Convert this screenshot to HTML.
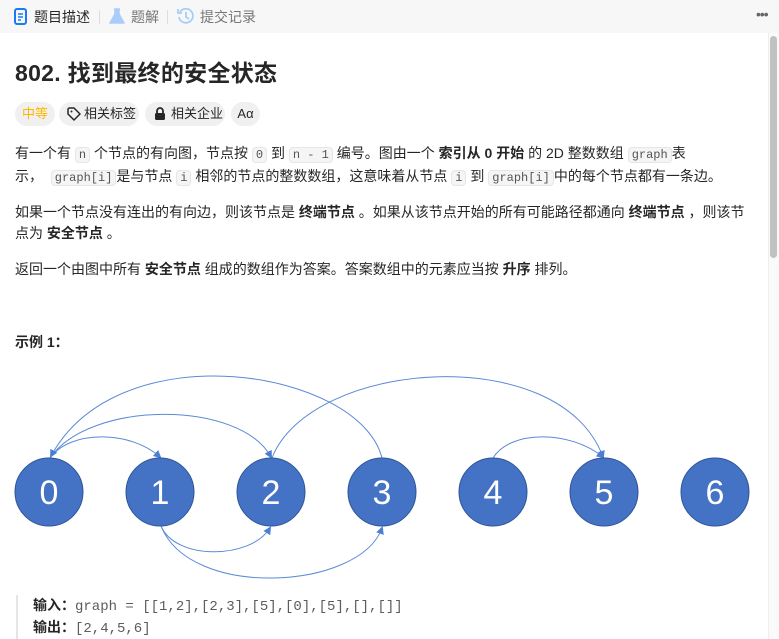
<!DOCTYPE html>
<html><head><meta charset="utf-8"><style>
*{margin:0;padding:0;box-sizing:border-box}
html,body{width:779px;height:639px;overflow:hidden}
body{background:#fff;font-family:"Liberation Sans","Noto Sans CJK SC",sans-serif;color:#262626;position:relative}
.hdr{position:absolute;left:0;top:0;width:779px;height:33px;background:#f7f7f8;font-size:14px}
.tab{position:absolute;top:8px;line-height:18px}
.sep{position:absolute;top:10px;width:1px;height:14px;background:#ddd}
.main{position:absolute;left:15px;top:0;width:745px}
h1{position:absolute;top:54px;left:0;font-size:23px;font-weight:700;white-space:nowrap;letter-spacing:0.3px}
.tags{position:absolute;top:102px;left:0;height:24px;width:300px}
.tag{position:absolute;top:0;height:24px;border-radius:12px;background:#f0f0f0;font-size:13px;line-height:24px;white-space:nowrap;color:#262626;padding-left:25px}
p{position:absolute;left:0;font-size:14px;line-height:21px;width:760px;white-space:nowrap}
code{font-family:"Liberation Mono",monospace;font-size:12px;background:#f5f5f5;border:1px solid #e6e6e6;border-radius:4px;padding:0 3px;color:#555}
b{font-weight:700}
.scroll{position:absolute;left:768px;top:33px;width:11px;height:606px;background:#fafafa;border-left:1px solid #eee}
.thumb{position:absolute;left:770px;top:36px;width:7px;height:222px;border-radius:4px;background:#c1c1c1}
.ex{position:absolute;left:16px;top:595px;border-left:2px solid #e5e5e5;padding-left:15px;font-size:14px;line-height:20px;width:700px}
.m{font-family:'Liberation Mono',monospace;color:#5c5c5c}
</style></head><body>
<div class="hdr">
 <svg style="position:absolute;left:14px;top:8px" width="13" height="17" viewBox="0 0 13 17"><rect x="1" y="1" width="11" height="15" rx="2" fill="none" stroke="#1a7cf5" stroke-width="2"/><path d="M4 6h5M4 9h5M4 12h3" stroke="#1a7cf5" stroke-width="1.6"/></svg>
 <span class="tab" style="left:34px;color:#262626">题目描述</span>
 <div class="sep" style="left:99px"></div>
 <svg style="position:absolute;left:109px;top:8px" width="16" height="17" viewBox="0 0 16 17"><path d="M5 1h6M6 1v5L1 15h14L10 6V1" fill="#a9cdf8" stroke="#a9cdf8" stroke-width="1.5" stroke-linejoin="round"/></svg>
 <span class="tab" style="left:131px;color:#777">题解</span>
 <div class="sep" style="left:167px"></div>
 <svg style="position:absolute;left:177px;top:7px" width="18" height="18" viewBox="0 0 18 18"><path d="M3 5A7 7 0 1 1 2 10" fill="none" stroke="#a9cdf8" stroke-width="1.8"/><path d="M1 2v4h4" fill="none" stroke="#a9cdf8" stroke-width="1.8"/><path d="M9 5v5l3 2" fill="none" stroke="#a9cdf8" stroke-width="1.8"/></svg>
 <span class="tab" style="left:200px;color:#777">提交记录</span>
 <span style="position:absolute;left:756px;top:6px;font-size:14px;color:#666;letter-spacing:-1px">•••</span>
</div>
<div class="main">
 <div class="tags">
  <span class="tag" style="left:0;width:40px;color:#ffb800;text-align:center;padding:0">中等</span>
  <span class="tag" style="left:44px;width:80px">相关标签<svg style="position:absolute;left:8px;top:5px" width="14" height="14" viewBox="0 0 14 14"><path d="M1 2v5l6 6 6-6-6-6H2z" fill="none" stroke="#262626" stroke-width="1.5" stroke-linejoin="round"/><circle cx="4.5" cy="4.5" r="1" fill="#262626"/></svg></span>
  <span class="tag" style="left:130px;width:80px;padding-left:26px">相关企业<svg style="position:absolute;left:9px;top:5px" width="12" height="14" viewBox="0 0 12 14"><path d="M3 6V4a3 3 0 0 1 6 0v2" fill="none" stroke="#262626" stroke-width="1.8"/><rect x="1" y="6" width="10" height="7" rx="1.5" fill="#262626"/></svg></span>
  <span class="tag" style="left:216px;width:29px;text-align:center;padding:0">Aα</span>
 </div>
 <h1>802. 找到最终的安全状态</h1>
 <p style="top:143px">有一个有 <code>n</code> 个节点的有向图，节点按 <code>0</code> 到 <code>n - 1</code> 编号。图由一个 <b>索引从 0 开始</b> 的 2D 整数数组 <code>graph</code>表<br>示，&nbsp; <code>graph[i]</code>是与节点 <code>i</code> 相邻的节点的整数数组，这意味着从节点 <code>i</code> 到 <code>graph[i]</code>中的每个节点都有一条边。</p>
 <p style="top:202px">如果一个节点没有连出的有向边，则该节点是 <b>终端节点</b> 。如果从该节点开始的所有可能路径都通向 <b>终端节点</b> ，则该节<br>点为 <b>安全节点</b> 。</p>
 <p style="top:259px">返回一个由图中所有 <b>安全节点</b> 组成的数组作为答案。答案数组中的元素应当按 <b>升序</b> 排列。</p>
 <p style="top:332px"><b>示例 1：</b></p>
</div>
<svg style="position:absolute;left:0;top:360px" width="768" height="230" viewBox="0 360 768 230">
 <defs><marker id="a" markerWidth="8" markerHeight="8" refX="6" refY="4" orient="auto"><path d="M0 0L8 4L0 8z" fill="#4a7fd4"/></marker></defs>
 <g fill="none" stroke="#5b8ad6" stroke-width="1">
  <path d="M50 458C70 430 130 430 160 457" marker-end="url(#a)"/>
  <path d="M50 458C90 400 240 400 271 457" marker-end="url(#a)"/>
  <path d="M382 458C360 370 120 330 51 456" marker-end="url(#a)"/>
  <path d="M272 458C310 360 560 340 603 457" marker-end="url(#a)"/>
  <path d="M493 458C510 430 570 430 603 457" marker-end="url(#a)"/>
  <path d="M161 526C175 560 250 560 270 528" marker-end="url(#a)"/>
  <path d="M161 526C190 600 360 590 382 528" marker-end="url(#a)"/>
 </g>
 <g fill="#4472c4" stroke="#2f5597" stroke-width="1">
  <ellipse cx="49" cy="492" rx="34" ry="34"/><ellipse cx="160" cy="492" rx="34" ry="34"/><ellipse cx="271" cy="492" rx="34" ry="34"/><ellipse cx="382" cy="492" rx="34" ry="34"/><ellipse cx="493" cy="492" rx="34" ry="34"/><ellipse cx="604" cy="492" rx="34" ry="34"/><ellipse cx="715" cy="492" rx="34" ry="34"/>
 </g>
 <g fill="#fff" font-family="Liberation Sans,sans-serif" font-size="34" text-anchor="middle">
  <text x="49" y="504">0</text><text x="160" y="504">1</text><text x="271" y="504">2</text><text x="382" y="504">3</text><text x="493" y="504">4</text><text x="604" y="504">5</text><text x="715" y="504">6</text>
 </g>
</svg>
<div class="ex"><div><b>输入：</b><span class="m">graph = [[1,2],[2,3],[5],[0],[5],[],[]]</span></div><div><b>输出：</b><span class="m">[2,4,5,6]</span></div><div><b>解释：</b>示意图如上。</div></div>
<div class="scroll"></div><div class="thumb"></div>
</body></html>
